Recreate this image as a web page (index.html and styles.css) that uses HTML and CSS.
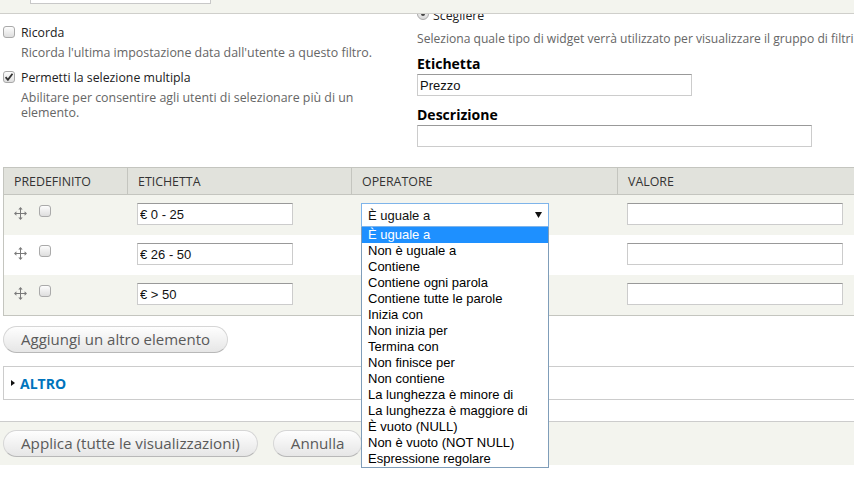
FILE: index.html
```html
<!DOCTYPE html>
<html lang="it">
<head>
<meta charset="utf-8">
<title>Filtro</title>
<link rel="stylesheet" href="styles.css">
</head>
<body>
<div class="page">
  <div class="topbar"><div class="stub"></div></div>

  <div class="settings">
    <div class="col-left">
      <div class="check-item">
        <div class="check-label"><span class="cb"></span><span>Ricorda</span></div>
        <div class="desc">Ricorda l'ultima impostazione data dall'utente a questo filtro.</div>
      </div>
      <div class="check-item">
        <div class="check-label"><span class="cb checked"><svg viewBox="0 0 12 12" width="12" height="12"><path d="M2.6 6.2l2.3 2.6 4.6-6" fill="none" stroke="#333" stroke-width="1.8"/></svg></span><span>Permetti la selezione multipla</span></div>
        <div class="desc">Abilitare per consentire agli utenti di selezionare più di un elemento.</div>
      </div>
    </div>
    <div class="col-right">
      <div class="inner">
        <div class="radio-label"><span class="radio"><span class="dot"></span></span><span>Scegliere</span></div>
        <div class="desc wide">Seleziona quale tipo di widget verrà utilizzato per visualizzare il gruppo di filtri.</div>
        <div class="field">
          <div class="field-label">Etichetta</div>
          <input class="text w-label" type="text" value="Prezzo">
        </div>
        <div class="field">
          <div class="field-label">Descrizione</div>
          <input class="text w-desc" type="text" value="">
        </div>
      </div>
    </div>
  </div>

  <table class="grid">
    <thead>
      <tr>
        <th class="c1">Predefinito</th>
        <th class="c2">Etichetta</th>
        <th class="c3">Operatore</th>
        <th class="c4">Valore</th>
      </tr>
    </thead>
    <tbody>
      <tr class="odd">
        <td><div class="handle-cell"><svg class="drag" viewBox="0 0 13 13" width="13" height="13"><path d="M6.5 2v9M2 6.5h9" stroke="#7a7a7a" stroke-width="1"/><path d="M6.5 0L4.3 2.4h4.4zM6.5 13l-2.2-2.4h4.4zM0 6.5l2.4-2.2v4.4zM13 6.5l-2.4-2.2v4.4z" fill="#7a7a7a"/></svg><span class="cb small"></span></div></td>
        <td><input class="text w-row" type="text" value="€ 0 - 25"></td>
        <td>
          <div class="select-wrap">
            <div class="select"><span>È uguale a</span><svg viewBox="0 0 7 6" width="7" height="6"><path d="M0 0h7L3.5 6z" fill="#111"/></svg></div>
            <ul class="options">
              <li class="sel">È uguale a</li>
              <li>Non è uguale a</li>
              <li>Contiene</li>
              <li>Contiene ogni parola</li>
              <li>Contiene tutte le parole</li>
              <li>Inizia con</li>
              <li>Non inizia per</li>
              <li>Termina con</li>
              <li>Non finisce per</li>
              <li>Non contiene</li>
              <li>La lunghezza è minore di</li>
              <li>La lunghezza è maggiore di</li>
              <li>È vuoto (NULL)</li>
              <li>Non è vuoto (NOT NULL)</li>
              <li>Espressione regolare</li>
            </ul>
          </div>
        </td>
        <td><input class="text w-val" type="text" value=""></td>
      </tr>
      <tr class="even">
        <td><div class="handle-cell"><svg class="drag" viewBox="0 0 13 13" width="13" height="13"><path d="M6.5 2v9M2 6.5h9" stroke="#7a7a7a" stroke-width="1"/><path d="M6.5 0L4.3 2.4h4.4zM6.5 13l-2.2-2.4h4.4zM0 6.5l2.4-2.2v4.4zM13 6.5l-2.4-2.2v4.4z" fill="#7a7a7a"/></svg><span class="cb small"></span></div></td>
        <td><input class="text w-row" type="text" value="€ 26 - 50"></td>
        <td></td>
        <td><input class="text w-val" type="text" value=""></td>
      </tr>
      <tr class="odd">
        <td><div class="handle-cell"><svg class="drag" viewBox="0 0 13 13" width="13" height="13"><path d="M6.5 2v9M2 6.5h9" stroke="#7a7a7a" stroke-width="1"/><path d="M6.5 0L4.3 2.4h4.4zM6.5 13l-2.2-2.4h4.4zM0 6.5l2.4-2.2v4.4zM13 6.5l-2.4-2.2v4.4z" fill="#7a7a7a"/></svg><span class="cb small"></span></div></td>
        <td><input class="text w-row" type="text" value="€ &gt; 50"></td>
        <td></td>
        <td><input class="text w-val" type="text" value=""></td>
      </tr>
    </tbody>
  </table>

  <div class="add-row"><span class="button">Aggiungi un altro elemento</span></div>

  <div class="fieldset"><span class="tri"></span><span class="legend">Altro</span></div>

  <div class="actions">
    <span class="button">Applica (tutte le visualizzazioni)</span>
    <span class="button">Annulla</span>
  </div>
</div>
</body>
</html>
```

FILE: styles.css
```css
* { box-sizing: border-box; }
html, body { margin: 0; padding: 0; overflow: hidden; }
body {
  width: 854px;
  height: 487px;
  background: #fff;
  font-family: "Open Sans", "DejaVu Sans", sans-serif;
  font-size: 12.3px;
  color: #333;
}
.page { width: 1000px; }

.topbar {
  height: 14px;
  background: #f3f4ee;
  border-bottom: 1px solid #cfcfcb;
}
.stub {
  margin-left: 30px;
  width: 181px;
  height: 4px;
  background: #fff;
  border: 1px solid #c8c8c8;
  border-top: 0;
}

.settings { display: flex; padding-left: 3px; }
.col-left { width: 390px; padding-top: 11px; flex: none; }
.col-right { margin-left: 24px; flex: 1; overflow: hidden; }
.col-right .inner { margin-top: -6px; }

.check-label, .radio-label {
  display: flex;
  align-items: flex-start;
  line-height: 15px;
  color: #222;
}
.check-item + .check-item { margin-top: 10px; }

.cb {
  flex: none;
  width: 12px;
  height: 12px;
  margin: 1px 6px 0 0;
  border: 1px solid #a9a9a9;
  border-radius: 3px;
  background: linear-gradient(#fdfdfd, #dedede);
  display: flex;
}
.cb.checked svg { display: block; margin: -1px; }
.cb.small { margin: 2px 0 0 12px; border-color: #aaa; }

.desc {
  color: #666;
  font-size: 12.4px;
  line-height: 15px;
  margin: 5px 0 0 18px;
}
.desc.wide { margin: 8px 0 0 0; white-space: nowrap; font-size: 12.1px; }

.radio {
  flex: none;
  width: 12px;
  height: 12px;
  margin: 0 4px 0 0;
  border: 1px solid #a9a9a9;
  border-radius: 50%;
  background: linear-gradient(#fdfdfd, #d8d8d8);
  display: flex;
  align-items: center;
  justify-content: center;
}
.radio .dot { width: 4px; height: 4px; border-radius: 50%; background: #444; }

.field { margin-top: 10px; }
.field + .field { margin-top: 11px; }
.field-label {
  font-weight: 700;
  font-size: 14px;
  line-height: 15px;
  color: #000;
}

.text {
  display: block;
  height: 22px;
  margin: 3px 0 0 0;
  padding: 0 2px;
  border: 1px solid #ccc;
  border-top-color: #999;
  background: #fff;
  font-family: "Liberation Sans", Arial, sans-serif;
  font-size: 13px;
  color: #111;
  outline: none;
}
.w-label { width: 275px; }
.w-desc { width: 395px; }
.w-row { width: 156px; margin: 0; }
.w-val { width: 216px; margin: 0; }

.grid {
  margin: 20px 0 0 3px;
  width: 997px;
  table-layout: fixed;
  border-collapse: separate;
  border-spacing: 0;
  border-left: 1px solid #c4c5bf;
  border-top: 1px solid #c4c5bf;
  border-bottom: 1px solid #c4c5bf;
}
.grid th {
  height: 27px;
  padding: 0 10px;
  background: #e1e2dc;
  border-bottom: 1px solid #c4c5bf;
  text-align: left;
  font-weight: 400;
  text-transform: uppercase;
  font-size: 12.4px;
  line-height: 15px;
  color: #333;
}
.grid th + th { border-left: 1px solid #c4c5bf; }
.grid .c1 { width: 123px; }
.grid .c2 { width: 224px; }
.grid .c3 { width: 266px; }
.grid .c4 { width: 384px; }
.grid td {
  height: 40px;
  padding: 8px 0 0 10px;
  vertical-align: top;
}
.grid tr.odd td { background: #f3f4ee; }
.grid tr.even td { background: #fff; }

.handle-cell { display: flex; align-items: flex-start; }
.drag { display: block; margin-top: 4px; flex: none; }

.select-wrap { position: relative; width: 188px; }
.select {
  height: 24px;
  border: 1px solid #7eb4ea;
  background: #fff;
  display: flex;
  align-items: center;
  justify-content: space-between;
  padding: 0 6px 0 6px;
  font-family: "Liberation Sans", Arial, sans-serif;
  font-size: 13px;
  color: #111;
}
.select svg { display: block; }
.options {
  position: absolute;
  top: 100%;
  left: 0;
  width: 188px;
  margin: 0;
  padding: 0;
  list-style: none;
  background: #fff;
  border: 1px solid #7f9db9;
  border-top: 0;
  z-index: 10;
  font-family: "Liberation Sans", Arial, sans-serif;
  font-size: 13px;
  color: #000;
}
.options li {
  height: 16px;
  line-height: 16px;
  padding-left: 6px;
  white-space: nowrap;
}
.options li.sel { background: #1e90ff; color: #fff; }

.add-row { margin: 10px 0 0 3px; }
.button {
  display: inline-block;
  height: 27px;
  padding: 0 17px;
  border: 1px solid #d6d6d6;
  border-bottom-color: #b8b8b8;
  border-radius: 14px;
  background: linear-gradient(#fefefe, #e6e6e6);
  font-size: 15px;
  line-height: 25px;
  color: #5a5a5a;
  white-space: nowrap;
}
.actions .button { font-size: 15.2px; }

.fieldset {
  margin: 13px 0 0 3px;
  width: 997px;
  height: 34px;
  border: 1px solid #ccc;
  padding-left: 7px;
  display: flex;
  align-items: center;
}
.tri {
  width: 0;
  height: 0;
  border-left: 4px solid #111;
  border-top: 3.5px solid transparent;
  border-bottom: 3.5px solid transparent;
  margin-right: 5px;
}
.legend {
  font-weight: 700;
  font-size: 14px;
  text-transform: uppercase;
  color: #0074bd;
}

.actions {
  margin-top: 21px;
  height: 44px;
  border-top: 1px solid #ccc;
  background: #f3f4ee;
  padding: 8px 0 0 3px;
  display: flex;
  gap: 15px;
}
```
